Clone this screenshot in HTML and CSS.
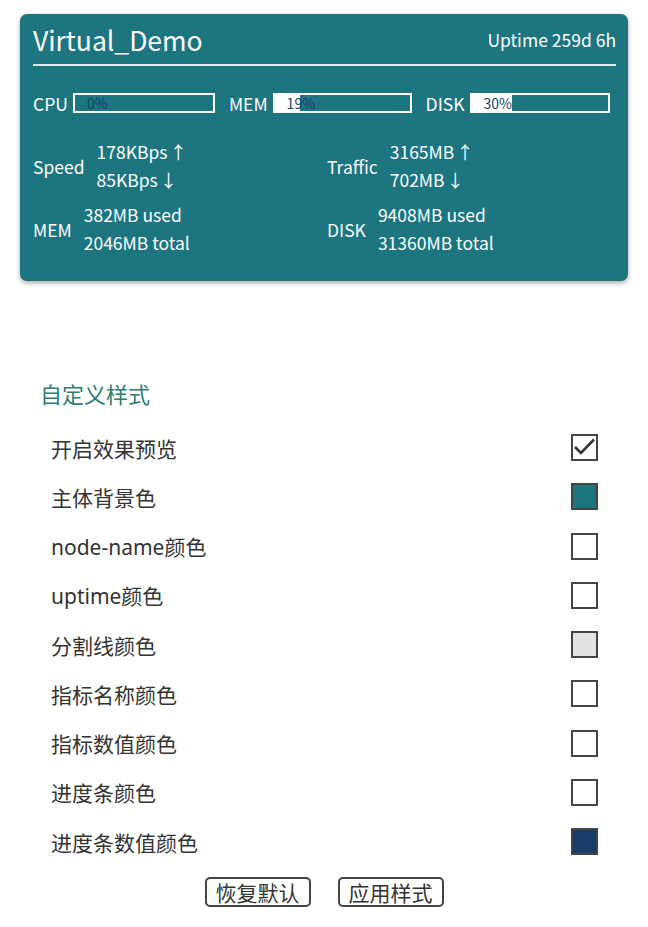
FILE: index.html
```html
<!DOCTYPE html>
<html lang="zh">
<head>
<meta charset="utf-8">
<title>Virtual_Demo</title>
<link rel="stylesheet" href="styles.css">
</head>
<body>
<div class="card">
  <div class="card-head">
    <span class="node-name">Virtual_Demo</span>
    <span class="uptime">Uptime 259d 6h</span>
  </div>
  <div class="bars">
    <div class="bar-item"><span class="lbl">CPU</span><div class="bar"><div class="fill" style="width:0%"></div><span class="pct">0%</span></div></div>
    <div class="bar-item"><span class="lbl">MEM</span><div class="bar"><div class="fill" style="width:19%"></div><span class="pct">19%</span></div></div>
    <div class="bar-item"><span class="lbl">DISK</span><div class="bar"><div class="fill" style="width:30%"></div><span class="pct">30%</span></div></div>
  </div>
  <div class="stats">
    <div class="stat"><span class="lbl">Speed</span><div class="vals"><span>178KBps<span class="arr">↑</span></span><span>85KBps<span class="arr">↓</span></span></div></div>
    <div class="stat"><span class="lbl">Traffic</span><div class="vals"><span>3165MB<span class="arr">↑</span></span><span>702MB<span class="arr">↓</span></span></div></div>
  </div>
  <div class="stats stats-2">
    <div class="stat"><span class="lbl">MEM</span><div class="vals"><span>382MB used</span><span>2046MB total</span></div></div>
    <div class="stat"><span class="lbl">DISK</span><div class="vals"><span>9408MB used</span><span>31360MB total</span></div></div>
  </div>
</div>

<div class="settings">
  <div class="settings-title">自定义样式</div>
  <ul class="opts">
    <li><span>开启效果预览</span><span class="box checked"><svg viewBox="0 0 23 23" width="23" height="23"><path d="M2 11 L8 17 L21 3.5" fill="none" stroke="#333" stroke-width="2.6"/></svg></span></li>
    <li><span>主体背景色</span><span class="box sw-teal"></span></li>
    <li><span>node-name颜色</span><span class="box"></span></li>
    <li><span>uptime颜色</span><span class="box"></span></li>
    <li><span>分割线颜色</span><span class="box sw-gray"></span></li>
    <li><span>指标名称颜色</span><span class="box"></span></li>
    <li><span>指标数值颜色</span><span class="box"></span></li>
    <li><span>进度条颜色</span><span class="box"></span></li>
    <li><span>进度条数值颜色</span><span class="box sw-navy"></span></li>
  </ul>
  <div class="actions">
    <button class="btn">恢复默认</button>
    <button class="btn">应用样式</button>
  </div>
</div>
</body>
</html>
```

FILE: styles.css
```css
html, body {
  margin: 0;
  padding: 0;
  background: #ffffff;
}
body {
  font-family: "Noto Sans CJK SC", "Noto Sans", sans-serif;
}
.card {
  margin: 14px 20px 0 20px;
  width: 608px;
  box-sizing: border-box;
  background: #1d7580;
  border-radius: 7px;
  box-shadow: 0 2px 5px rgba(0, 0, 0, 0.35);
  padding: 6px 12px 24px 13px;
  color: #ffffff;
}
.card-head {
  display: flex;
  justify-content: space-between;
  align-items: center;
  height: 40px;
  padding-bottom: 4px;
  border-bottom: 2px solid #d9eeee;
}
.node-name {
  font-size: 26.5px;
  line-height: 40px;
}
.uptime {
  font-size: 17.5px;
  line-height: 40px;
}
.bars {
  display: flex;
  margin-top: 27px;
  height: 20px;
  align-items: center;
}
.bar-item {
  display: flex;
  align-items: center;
  font-size: 17.5px;
}
.bar-item + .bar-item {
  margin-left: 14px;
}
.bar-item .lbl {
  margin-right: 5px;
}
.bar {
  position: relative;
  width: 142px;
  height: 20px;
  box-sizing: border-box;
  border: 2px solid #ffffff;
  display: flex;
  align-items: center;
}
.bar-item:nth-child(2) .bar {
  width: 139px;
}
.bar-item:nth-child(3) .bar {
  width: 140px;
}
.fill {
  position: absolute;
  left: 0;
  top: 0;
  bottom: 0;
  background: #ffffff;
}
.pct {
  position: relative;
  padding-left: 12px;
  font-size: 14px;
  line-height: 16px;
  color: #173e6a;
}
.stats {
  display: flex;
  margin-top: 25px;
}
.stats-2 {
  margin-top: 7px;
}
.stat {
  display: flex;
  align-items: center;
  flex: none;
  width: 294px;
  font-size: 17.5px;
}
.stat + .stat {
  width: auto;
}
.stat .lbl {
  margin-right: 12px;
}
.vals {
  display: flex;
  flex-direction: column;
  line-height: 28px;
}
.arr {
  margin-left: 2px;
}
.settings {
  margin-top: 97px;
  padding: 0 50px 0 40px;
  font-family: "Noto Sans", "Noto Sans CJK SC", sans-serif;
}
.settings-title {
  font-family: "Noto Sans CJK SC", sans-serif;
  color: #2e7d6e;
  font-size: 22px;
  line-height: 30px;
}
.opts {
  list-style: none;
  margin: 15px 0 0 0;
  padding: 0 0 0 11px;
}
.opts li {
  display: flex;
  justify-content: space-between;
  align-items: center;
  height: 49.25px;
  font-size: 21px;
  color: #333333;
}
.box {
  width: 27px;
  height: 27px;
  box-sizing: border-box;
  border: 2px solid #444444;
  background: #ffffff;
  display: flex;
  align-items: center;
  justify-content: center;
}
.sw-teal { background: #1d7580; }
.sw-gray { background: #e2e2e2; }
.sw-navy { background: #173e6a; }
.actions {
  display: flex;
  justify-content: center;
  gap: 27px;
  margin-top: 11px;
  margin-left: 10px;
}
.btn {
  font-family: "Noto Sans CJK SC", sans-serif;
  font-size: 21px;
  line-height: 25px;
  color: #333333;
  background: #ffffff;
  border: 2px solid #444444;
  border-radius: 5px;
  padding: 0 9px;
  height: 30px;
}
```
